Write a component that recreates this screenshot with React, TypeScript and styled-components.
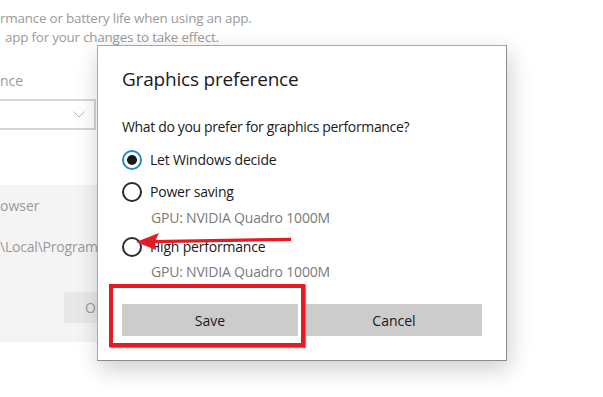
import styled, { createGlobalStyle } from 'styled-components'

const GlobalStyle = createGlobalStyle`
    * {
        box-sizing: border-box;
    }
    body {
        margin: 0;
        background: #ffffff;
        font-family: 'Open Sans', 'Noto Sans', sans-serif;
        color: #1a1a1a;
    }
`

const Page = styled('div')`
    position: relative;
    width: 603px;
    height: 397px;
    overflow: hidden;
    background: #ffffff;
`

// settings page behind the dialog
const Backdrop = styled('div')`
    display: flex;
    flex-direction: column;
    padding-top: 9px;
    color: #9a9a9a;
    font-size: 14px;
`

const Intro = styled('p')`
    margin: 0;
    font-size: 13.4px;
    line-height: 18.5px;
    letter-spacing: -0.2px;
`

const IntroLine = styled('span')<{ indent?: number }>`
    display: block;
    padding-left: ${(props) => props.indent || 0}px;
`

const FieldLabel = styled('p')`
    margin: 25px 0 0;
    line-height: 20px;
`

const Dropdown = styled('div')`
    display: flex;
    align-items: center;
    justify-content: flex-end;
    width: 96px;
    height: 31px;
    margin-top: 8px;
    padding-right: 9px;
    border: 2px solid #d6d6d6;
    border-left: none;
`

const AppPanel = styled('div')`
    display: flex;
    flex-direction: column;
    width: 300px;
    height: 157px;
    margin-top: 55px;
    background: #f4f4f4;
`

const AppName = styled('p')`
    margin: 11px 0 0;
    line-height: 20px;
`

const AppPath = styled('p')`
    margin: 21px 0 0;
    line-height: 20px;
    letter-spacing: -0.2px;
`

const PanelButton = styled('div')`
    width: 120px;
    height: 31px;
    margin: 35px 0 0 64px;
    padding-left: 21px;
    line-height: 31px;
    background: #e8e8e8;
`

const Dialog = styled('section')`
    position: absolute;
    left: 97px;
    top: 45px;
    width: 410px;
    height: 316px;
    display: flex;
    flex-direction: column;
    padding: 19px 24px 24px;
    background: #ffffff;
    border: 1px solid #a8a8a8;
    border-right-color: #8c8c8c;
    border-bottom-color: #8c8c8c;
    box-shadow: 2px 8px 22px rgba(0, 0, 0, 0.2);
`

const Title = styled('h2')`
    margin: 0;
    font-size: 19px;
    font-weight: 400;
    line-height: 28px;
    letter-spacing: -0.2px;
`

const Question = styled('p')`
    margin: 24px 0 0;
    font-size: 14px;
    line-height: 20px;
    letter-spacing: -0.35px;
`

const Option = styled('label')<{ gap: number }>`
    display: flex;
    align-items: center;
    gap: 8px;
    height: 20px;
    margin-top: ${(props) => props.gap}px;
    font-size: 14px;
    line-height: 20px;
    letter-spacing: -0.2px;
`

const RadioCircle = styled('span')<{ checked?: boolean }>`
    display: flex;
    align-items: center;
    justify-content: center;
    width: 20px;
    height: 20px;
    border-radius: 50%;
    border: 2px solid ${(props) => (props.checked ? '#1f8ad2' : '#2b2b2b')};

    &::after {
        content: '';
        width: 10px;
        height: 10px;
        border-radius: 50%;
        background: ${(props) => (props.checked ? '#1a1a1a' : 'transparent')};
    }
`

const GpuNote = styled('p')<{ gap: number }>`
    margin: ${(props) => props.gap}px 0 0;
    padding-left: 29px;
    font-size: 14px;
    line-height: 20px;
    letter-spacing: -0.2px;
    color: #7a7a7a;
`

const Actions = styled('div')`
    display: grid;
    grid-template-columns: 1fr 1fr;
    gap: 8px;
    margin-top: 22px;
`

const Button = styled('button')`
    height: 32px;
    border: none;
    background: #cccccc;
    font-family: inherit;
    font-size: 14px;
    color: #1a1a1a;
`

const Highlight = styled('div')`
    position: absolute;
    left: 109px;
    top: 284px;
    width: 196px;
    height: 63px;
    border: 4px solid #e31b23;
    box-shadow: 1px 1px 1px rgba(0, 0, 0, 0.45);
`

const ArrowSvg = styled('svg')`
    position: absolute;
    left: 130px;
    top: 228px;
`

const Chevron = () => (
    <svg width="12" height="7" viewBox="0 0 12 7">
        <path d="M0.5 0.5 L6 6 L11.5 0.5" fill="none" stroke="#b4b4b4" strokeWidth="1" />
    </svg>
)

const Arrow = () => (
    <ArrowSvg width="170" height="28" viewBox="130 228 170 28">
        <path d="M291 239.3 L154 241.6" stroke="#e31b23" strokeWidth="3.2" />
        <path d="M136 242 L159 233 L155 241.5 L156 250 Z" fill="#e31b23" />
    </ArrowSvg>
)

const App = () => {
    return (
        <Page>
            <GlobalStyle />
            <Backdrop>
                <Intro>
                    <IntroLine>rmance or battery life when using an app.</IntroLine>
                    <IntroLine indent={5}>app for your changes to take effect.</IntroLine>
                </Intro>
                <FieldLabel>nce</FieldLabel>
                <Dropdown>
                    <Chevron />
                </Dropdown>
                <AppPanel>
                    <AppName>owser</AppName>
                    <AppPath>\Local\Programs\</AppPath>
                    <PanelButton>Options</PanelButton>
                </AppPanel>
            </Backdrop>

            <Dialog>
                <Title>Graphics preference</Title>
                <Question>What do you prefer for graphics performance?</Question>
                <Option gap={13}>
                    <RadioCircle checked />
                    Let Windows decide
                </Option>
                <Option gap={12}>
                    <RadioCircle />
                    Power saving
                </Option>
                <GpuNote gap={6}>GPU: NVIDIA Quadro 1000M</GpuNote>
                <Option gap={9}>
                    <RadioCircle />
                    High performance
                </Option>
                <GpuNote gap={5}>GPU: NVIDIA Quadro 1000M</GpuNote>
                <Actions>
                    <Button>Save</Button>
                    <Button>Cancel</Button>
                </Actions>
            </Dialog>

            <Highlight />
            <Arrow />
        </Page>
    )
}

export default App
